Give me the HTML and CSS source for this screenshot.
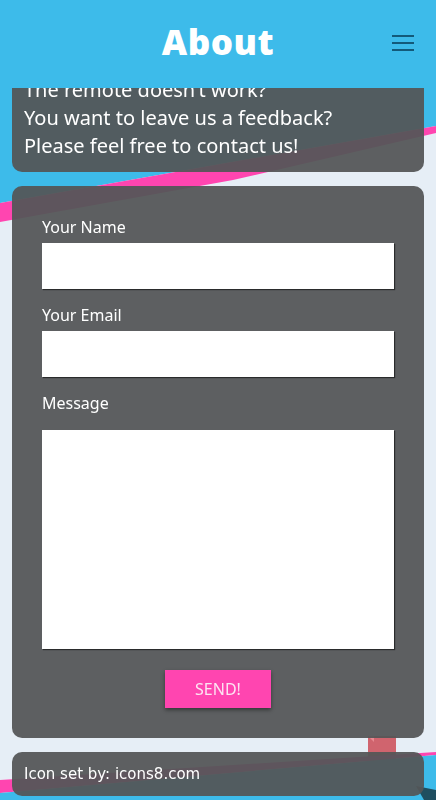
FILE: index.html
```
<!DOCTYPE html>
<html>
<head>
	<meta name="viewport" content="width=device-width,initial-scale=1" />
	<meta charset="utf-8" />
	<title>About</title>
	<link rel="stylesheet" href="styles.css">
</head>
<body>
	<div class="bg">
		<svg viewBox="0 0 436 800" preserveAspectRatio="none" width="100%" height="100%">
			<polygon points="0,0 436,0 436,126 0,203" fill="#3dbbea"/>
			<polygon points="0,203 436,126 436,133 233,180 0,222" fill="#ff45b0"/>
			<rect x="368" y="736" width="28" height="60" fill="#d0646e"/>
			<polygon points="368,736 374,736 374,742" fill="#e88a92"/>
			<polygon points="0,780 436,752 436,755 0,793" fill="#ff45b0"/>
			<polygon points="0,793 436,755 436,800 0,800" fill="#3dbbea"/>
			<polygon points="416,786 436,790 436,800 424,800" fill="#1f4e60"/>
		</svg>
	</div>

	<div class="header">
		<span></span>
		<h1 class="title">About</h1>
		<div class="menu">
			<i></i><i></i><i></i>
		</div>
	</div>

	<div class="main">
		<div class="card intro">
			<p>The remote doesn’t work?<br/>You want to leave us a feedback?<br/>Please feel free to contact us!</p>
		</div>

		<form class="card contact">
			<label for="name">Your Name</label>
			<input type="text" id="name" />
			<label for="email">Your Email</label>
			<input type="text" id="email" />
			<label for="msg" class="msg_label">Message</label>
			<textarea id="msg"></textarea>
			<div class="send_row">
				<button type="button" class="send">SEND!</button>
			</div>
		</form>

		<div class="card credits">Icon set by: icons8.com</div>
	</div>
</body>
</html>
```

FILE: styles.css
```
html, body{
	margin: 0;
	padding: 0;
	height: 800px;
	overflow: hidden;
}
body{
	background-color: #e6eef6;
	font-family: "Noto Sans", "Open Sans", sans-serif;
	color: #fff;
}
.bg{
	position: fixed;
	left: 0;
	top: 0;
	width: 100%;
	height: 100%;
	z-index: -1;
}
.bg svg{
	display: block;
}
.header{
	position: relative;
	z-index: 2;
	height: 88px;
	background-color: #3dbbea;
	display: grid;
	grid-template-columns: 1fr auto 1fr;
	align-items: center;
}
.title{
	margin: 0 0 6px;
	font-family: "Open Sans", sans-serif;
	font-weight: 800;
	font-size: 35px;
	line-height: 1;
	letter-spacing: 0.5px;
	color: #fff;
}
.menu{
	justify-self: end;
	margin-right: 22px;
	margin-bottom: 2px;
	width: 22px;
	display: flex;
	flex-direction: column;
	gap: 4.5px;
}
.menu i{
	display: block;
	height: 2.5px;
	background-color: #135a7a;
}
.main{
	margin-top: -21px;
	padding: 0 12px;
	display: flex;
	flex-direction: column;
	gap: 14px;
}
.card{
	background-color: rgba(84, 86, 87, 0.94);
	border-radius: 10px;
}
.intro p{
	margin: 0;
	padding: 9px 12px 12px;
	font-size: 20px;
	line-height: 28px;
}
.contact{
	padding: 30px 30px 30px;
	display: flex;
	flex-direction: column;
}
.contact label{
	font-size: 16px;
	line-height: 22px;
	margin-bottom: 5px;
}
.contact input,
.contact textarea{
	border: none;
	outline: none;
	background-color: #fff;
	box-shadow: 1px 1px 1px rgba(0, 0, 0, 0.55);
	margin: 0 0 15px;
	padding: 0;
	border-radius: 0;
}
.contact input{
	height: 46px;
}
.contact .msg_label{
	margin-bottom: 16px;
}
.contact textarea{
	height: 219px;
	resize: none;
	margin-bottom: 21px;
}
.send_row{
	display: flex;
	justify-content: center;
}
.send{
	width: 106px;
	height: 38px;
	border: none;
	background-color: #ff45b0;
	color: #fde4f2;
	font-family: "Noto Sans", sans-serif;
	font-size: 16px;
	box-shadow: 0 2px 4px rgba(0, 0, 0, 0.45);
	cursor: pointer;
}
.credits{
	padding: 11px 12px;
	font-family: "DejaVu Sans", sans-serif;
	font-size: 15px;
	line-height: 22px;
}
```
